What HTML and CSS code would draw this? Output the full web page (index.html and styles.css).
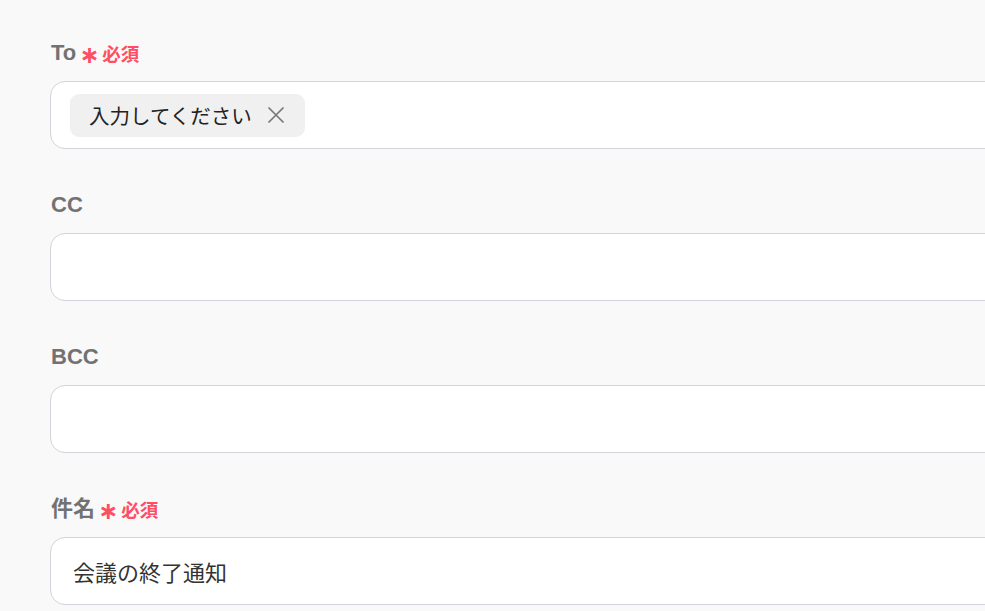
FILE: index.html
```html
<!DOCTYPE html>
<html lang="ja">
<head>
<meta charset="utf-8">
<link rel="stylesheet" href="styles.css">
</head>
<body>
<div class="form">
  <div class="field">
    <div class="label">To <span class="star">∗</span><span class="req">必須</span></div>
    <div class="input">
      <span class="chip">入力してください
        <svg class="x" width="18" height="18" viewBox="0 0 18 18"><path d="M1.5 1.5L16.5 16.5M16.5 1.5L1.5 16.5" stroke="#777" stroke-width="1.7" fill="none"/></svg>
      </span>
    </div>
  </div>
  <div class="field">
    <div class="label">CC</div>
    <div class="input"></div>
  </div>
  <div class="field">
    <div class="label">BCC</div>
    <div class="input"></div>
  </div>
  <div class="field">
    <div class="label">件名 <span class="star">∗</span><span class="req">必須</span></div>
    <div class="input"><span class="value">会議の終了通知</span></div>
  </div>
</div>
</body>
</html>
```
FILE: styles.css
```css
html, body {
  margin: 0;
  padding: 0;
  background: #f9f9f9;
  overflow: hidden;
}
body {
  width: 985px;
  height: 611px;
  font-family: "Liberation Sans", "Noto Sans CJK JP", sans-serif;
}
.form {
  padding: 41px 0 0 50px;
  display: flex;
  flex-direction: column;
  gap: 44px;
}
.field {
  display: flex;
  flex-direction: column;
  gap: 16px;
}
.label {
  height: 24px;
  line-height: 24px;
  font-size: 22px;
  font-weight: bold;
  color: #727272;
  display: flex;
  align-items: center;
  padding-left: 1px;
}
.star {
  color: #ff4d64;
  font-size: 24px;
  margin-left: 3px;
  margin-right: 3px;
  font-family: "DejaVu Sans", sans-serif;
  position: relative;
  top: 2px;
}
.req {
  color: #ff4d64;
  font-size: 18.5px;
  font-family: "Noto Sans CJK JP", sans-serif;
}
.input {
  box-sizing: border-box;
  width: 1000px;
  height: 68px;
  background: #fff;
  border: 1px solid #d2d4da;
  border-radius: 15px;
  display: flex;
  align-items: center;
  padding-left: 19px;
}
.chip {
  display: inline-flex;
  align-items: center;
  height: 43px;
  padding: 0 20px 0 19px;
  background: #f0f0f0;
  border-radius: 9px;
  font-family: "Noto Sans CJK JP", sans-serif;
  font-size: 20.5px;
  color: #222;
  gap: 15px;
}
.x {
  display: block;
}
.value {
  font-family: "Noto Sans CJK JP", sans-serif;
  font-size: 22px;
  color: #333;
  padding-left: 3px;
}
```
